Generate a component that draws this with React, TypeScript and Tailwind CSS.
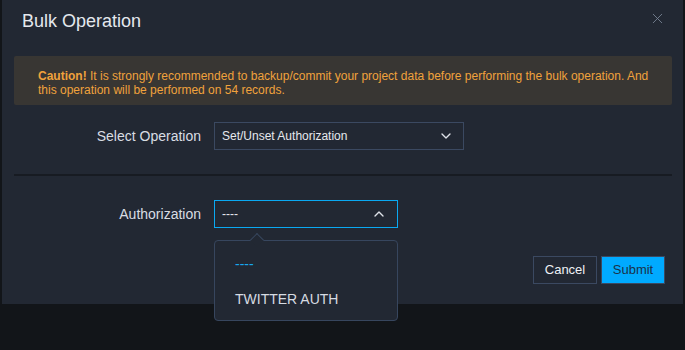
import { ChevronDown, ChevronUp, X } from 'lucide-react';

export default function App() {
  return (
    <div
      className="relative h-[350px] w-[685px] overflow-hidden bg-[#121519]"
      style={{ fontFamily: '"Liberation Sans", Arial, sans-serif' }}
    >
      {/* Dialog */}
      <div className="ml-[2px] flex h-[304px] w-[681px] flex-col bg-[#222833]">
        {/* Header */}
        <div className="flex h-[42px] items-center justify-between pl-[20px] pr-[17px] pt-[1px]">
          <h2 className="text-[18px] text-[#e4e8ee]">Bulk Operation</h2>
          <X size={17} strokeWidth={1.2} className="mt-[-6px] text-[#7b8698]" />
        </div>

        {/* Caution */}
        <div className="ml-[12px] mr-[11px] mt-[14px] rounded-[2px] bg-[#383633] pb-[8px] pl-[24px] pr-[20px] pt-[13px] text-[12px] leading-[14px] text-[#f0a23c]">
          <span className="font-bold">Caution!</span> It is strongly recommended to backup/commit your project data before performing the bulk operation. And this operation will be performed on 54 records.
        </div>

        {/* Select Operation */}
        <div className="mt-[17px] flex items-center">
          <label className="w-[199px] text-right text-[14px] text-[#d9dde3]">Select Operation</label>
          <div className="ml-[13px] flex h-[28px] w-[250px] items-center justify-between border border-[#3b4961] pl-[7px] pr-[9px]">
            <span className="text-[12px] text-[#e6e9ee]">Set/Unset Authorization</span>
            <ChevronDown size={16} strokeWidth={2} className="text-[#dfe3e9]" />
          </div>
        </div>

        {/* Divider */}
        <div className="ml-[12px] mt-[24px] h-[2px] w-[658px] bg-[#171b22]" />

        {/* Authorization */}
        <div className="mt-[24px] flex items-center">
          <label className="w-[199px] text-right text-[14px] text-[#d9dde3]">Authorization</label>
          <div className="ml-[13px] flex h-[28px] w-[184px] items-center justify-between border border-[#0aa9f2] pl-[7px] pr-[10px]">
            <span className="text-[12px] text-[#e6e9ee]">----</span>
            <ChevronUp size={16} strokeWidth={2} className="text-[#dfe3e9]" />
          </div>
        </div>

        {/* Footer */}
        <div className="mt-[28px] flex justify-end gap-[4px] pr-[18px]">
          <button className="h-[28px] w-[64px] border border-[#3b4961] text-[13px] text-[#eef1f5]">Cancel</button>
          <button className="h-[28px] w-[64px] border border-[#3b4961] bg-[#00aaff] text-[13px] text-[#1b3149]">Submit</button>
        </div>
      </div>

      {/* Dropdown menu */}
      <div className="absolute left-[214px] top-[240px] h-[81px] w-[184px] rounded-[4px] border border-[#37465e] bg-[#222833] pl-[20px] pt-[12px]">
        <div className="absolute left-[37px] top-[-6px] h-[10px] w-[10px] rotate-45 border-l border-t border-[#37465e] bg-[#222833]" />
        <div className="flex h-[22px] items-center text-[14px] text-[#17a8f0]">----</div>
        <div className="mt-[13px] flex h-[22px] items-center text-[14px] text-[#d6dbe2]">TWITTER AUTH</div>
      </div>
    </div>
  );
}
